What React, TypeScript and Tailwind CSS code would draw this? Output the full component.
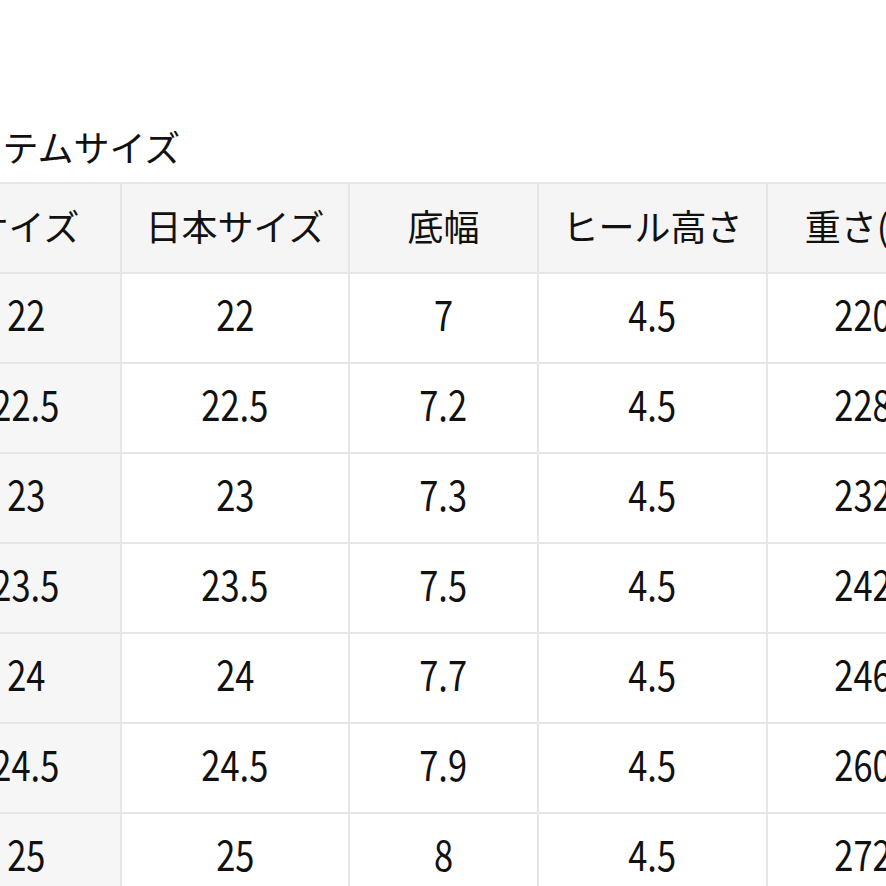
import React from 'react';

const headers = ['サイズ', '日本サイズ', '底幅', 'ヒール高さ', '重さ(g)'];

const rows = [
  ['22', '22', '7', '4.5', '220'],
  ['22.5', '22.5', '7.2', '4.5', '228'],
  ['23', '23', '7.3', '4.5', '232'],
  ['23.5', '23.5', '7.5', '4.5', '242'],
  ['24', '24', '7.7', '4.5', '246'],
  ['24.5', '24.5', '7.9', '4.5', '260'],
  ['25', '25', '8', '4.5', '272'],
];

const colWidths = ['w-[190px]', 'w-[228px]', 'w-[189px]', 'w-[229px]', 'w-[192px]'];

const App = () => {
  return (
    <div className="w-[886px] h-[886px] overflow-hidden bg-white text-[#111] font-['Noto_Sans_CJK_JP',sans-serif]">
      <div className="ml-[-70px] pt-[126px] w-[1040px]">
        {/* Title */}
        <h2 className="h-[40px] leading-[40px] text-[36px] font-normal pl-[3px]">アイテムサイズ</h2>

        {/* Size table */}
        <table className="mt-[16px] table-fixed border-collapse">
          <colgroup>
            {colWidths.map((w, i) => (
              <col key={i} className={w} />
            ))}
          </colgroup>
          <thead>
            <tr className="h-[90px] bg-[#f5f5f5]">
              {headers.map((h, i) => (
                <th
                  key={i}
                  className="border-2 border-[#e6e6e6] pb-[6px] text-center align-middle text-[36px] font-normal leading-none whitespace-nowrap"
                >
                  {h}
                </th>
              ))}
            </tr>
          </thead>
          <tbody>
            {rows.map((r, ri) => (
              <tr key={ri} className="h-[90px]">
                {r.map((v, ci) => (
                  <td
                    key={ci}
                    className={`border-2 border-[#e6e6e6] pb-[9px] text-center align-middle whitespace-nowrap ${ci === 0 ? 'bg-[#f6f6f6]' : 'bg-white'}`}
                  >
                    <span className="inline-block scale-x-[0.82] text-[42px] leading-none">
                      {v}
                    </span>
                  </td>
                ))}
              </tr>
            ))}
          </tbody>
        </table>
      </div>
    </div>
  );
};

export default App;
